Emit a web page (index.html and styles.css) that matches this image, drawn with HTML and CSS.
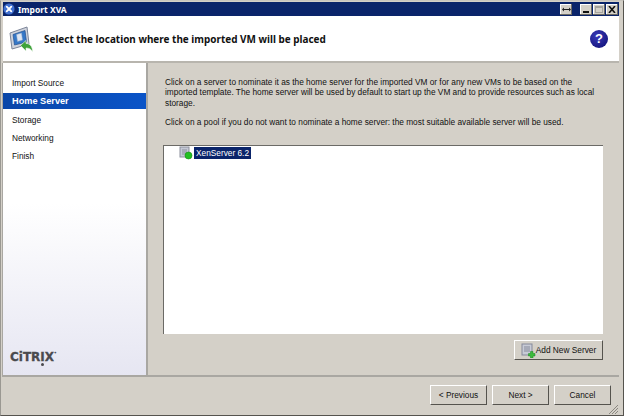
FILE: index.html
```html
<!DOCTYPE html>
<html lang="en">
<head>
    <meta charset="UTF-8">
    <meta name="viewport" content="width=device-width, initial-scale=1.0">
    <title>Import XVA</title>
    <link rel="stylesheet" href="styles.css">
</head>
<body>
    <div class="window">
        <div class="titlebar">
            <svg class="app-icon" width="12" height="12" viewBox="0 0 13 13">
                <circle cx="6.5" cy="6.5" r="6" fill="#3f6fd0"/>
                <path d="M4 4l5 5M9 4l-5 5" stroke="#fff" stroke-width="2" stroke-linecap="round"/>
            </svg>
            <span class="title-text">Import XVA</span>
            <span class="spacer"></span>
            <span class="cap-btn cap-wide">
                <svg width="9" height="5" viewBox="0 0 9 5"><path d="M0 2.5l2-2v1.500h5V.5l2 2-2 2V3H2v1.500z" fill="#222"/></svg>
            </span>
            <span class="cap-btn cap-gap"><i class="min-bar"></i></span>
            <span class="cap-btn"><i class="max-box"></i></span>
            <span class="cap-btn">
                <svg width="8" height="7" viewBox="0 0 8 7"><path d="M1 0l6 7M7 0L1 7" stroke="#111" stroke-width="1.600"/></svg>
            </span>
        </div>
        <div class="header">
            <svg class="header-icon" width="24" height="26" viewBox="0 0 24 26">
                <path d="M1 7L18 1l2 17L3 23z" fill="#cfd3dc" stroke="#7d8699"/>
                <path d="M4 8.500L16 4.500l1.500 11.500-12 3z" fill="#3578c8" stroke="#25508f" stroke-width=".7"/>
                <path d="M7.500 8.500l5-1.500 1 7-5 1.500z" fill="#dfe6f2" stroke="#8fa6c4" stroke-width=".5"/>
                <path d="M11.500 19.500l5.500-5v3c4 0 6.500 3 6.500 8-1.500-2.500-3.500-3.500-6.500-3.500v3z" fill="#3ea23a" stroke="#e8f3e6" stroke-width=".6"/>
            </svg>
            <h1 class="header-title">Select the location where the imported VM will be placed</h1>
            <span class="help">?</span>
        </div>
        <div class="middle">
            <div class="sidebar">
                <ul class="steps">
                    <li>Import Source</li>
                    <li class="active">Home Server</li>
                    <li>Storage</li>
                    <li>Networking</li>
                    <li>Finish</li>
                </ul>
                <div class="logo">CiTR<span class="logo-dot">I</span>X<sup class="logo-mark">&#8226;</sup></div>
            </div>
            <div class="content">
                <p class="intro">Click on a server to nominate it as the home server for the imported VM or for any new VMs to be based on the imported template. The home server will be used by default to start up the VM and to provide resources such as local storage.</p>
                <p class="intro">Click on a pool if you do not want to nominate a home server: the most suitable available server will be used.</p>
                <div class="server-list">
                    <div class="server-row">
                        <svg width="14" height="14" viewBox="0 0 14 14">
                            <rect x="1" y="1" width="9" height="10" fill="#c5c9d6" stroke="#8b8f9c"/>
                            <path d="M3 4h5M3 6h5M3 8h5" stroke="#8b8f9c"/>
                            <circle cx="9.500" cy="9.500" r="3.500" fill="#22c022" stroke="#148a14" stroke-width=".6"/>
                        </svg>
                        <span class="server-name">XenServer 6.2</span>
                    </div>
                </div>
                <div class="list-actions">
                    <button class="btn btn-add">
                        <svg width="15" height="15" viewBox="0 0 15 15">
                            <rect x="1" y="1" width="10" height="11" fill="#c8cbd6" stroke="#85899a"/>
                            <path d="M3 4h6M3 6h6M3 8h6" stroke="#85899a"/>
                            <path d="M9.500 8.500h2.500v2h2v2.500h-2v2H9.500v-2h-2v-2.500h2z" fill="#3dbb3d" stroke="#1c861c" stroke-width=".5"/>
                        </svg>Add New Server
                    </button>
                </div>
            </div>
        </div>
        <div class="footer">
            <button class="btn btn-nav">&lt; Previous</button>
            <button class="btn btn-nav">Next &gt;</button>
            <button class="btn btn-nav">Cancel</button>
            <svg class="grip" width="11" height="11" viewBox="0 0 11 11"><path d="M10 1L1 10M10 4L4 10M10 7l-3 3" stroke="#8a8780"/></svg>
        </div>
    </div>
</body>
</html>
```
FILE: styles.css
```css
* {
    box-sizing: border-box;
}
html, body {
    margin: 0;
    height: 100%;
}
body {
    font-family: "Liberation Sans", Arial, sans-serif;
    font-size: 8.300px;
    color: #111;
    background: #d4d0c8;
    overflow: hidden;
}
.window {
    width: 624px;
    height: 416px;
    display: flex;
    flex-direction: column;
    padding: 1px 4px 0 2px;
    background: #d4d0c8;
    border-bottom: 1px solid #55534e;
    border-right: 1px solid #55534e;
    border-top: 1px solid #c8c5be;
    border-left: 1px solid #9a9892;
}
.titlebar {
    height: 14px;
    flex: none;
    display: flex;
    align-items: center;
    padding: 0 1px 0 0;
    background: #0a246a;
    color: #fff;
}
.title-text {
    margin-left: 3px;
    font-family: "Noto Sans", sans-serif;
    font-weight: 700;
    font-size: 8.500px;
}
.spacer {
    flex: 1;
}
.app-icon {
    flex: none;
}
.cap-btn {
    width: 12px;
    height: 11px;
    margin-left: 1px;
    display: flex;
    align-items: center;
    justify-content: center;
    background: #d4d0c8;
    box-shadow: inset -1px -1px 0 #6d6b66, inset 1px 1px 0 #fff;
}
.cap-gap {
    margin-left: 8px;
}
.min-bar {
    width: 6px;
    height: 2px;
    margin-top: 6px;
    background: #111;
}
.max-box {
    width: 8px;
    height: 7px;
    border: 1px solid #a5a39d;
    border-top-width: 2px;
}
.header {
    height: 47px;
    flex: none;
    display: flex;
    align-items: center;
    padding: 0 11px 0 6px;
    background: #fff;
    border-bottom: 2px solid #b8b5ae;
}
.header-title {
    flex: 1;
    margin: 0 0 0 11px;
    font-family: "Noto Sans", sans-serif;
    font-size: 9.950px;
    font-weight: 700;
    color: #111;
}
.help {
    width: 18px;
    height: 18px;
    border-radius: 50%;
    display: flex;
    align-items: center;
    justify-content: center;
    background: radial-gradient(circle at 40% 35%, #3a3ab8, #0b0b70);
    color: #fff;
    font-size: 13px;
    font-weight: 700;
}
.middle {
    flex: 1;
    display: flex;
    min-height: 0;
}
.sidebar {
    width: 145px;
    flex: none;
    display: flex;
    flex-direction: column;
    background: linear-gradient(to bottom, #fff 45%, #e6e6f2);
    border-right: 2px solid #a9a7a2;
    border-bottom: 2px solid #a9a7a2;
    box-shadow: -1px 0 0 #a9a7a2;
}
.steps {
    list-style: none;
    margin: 12px 0 0;
    padding: 0;
}
.steps li {
    height: 16px;
    margin-bottom: 2.300px;
    padding-left: 9px;
    line-height: 16px;
}
.steps .active {
    background: linear-gradient(to right, #0a46a8, #0a54c8);
    color: #fff;
    font-size: 9.200px;
    font-weight: 700;
}
.logo {
    margin: auto 0 10px 7px;
    font-family: "DejaVu Sans", sans-serif;
    font-size: 12px;
    font-weight: 700;
    line-height: 16px;
    color: #4a4a4e;
    -webkit-text-stroke: .3px #4a4a4e;
}
.logo-dot {
    position: relative;
}
.logo-dot::after {
    content: "";
    position: absolute;
    left: 1px;
    bottom: -2px;
    width: 3px;
    height: 3px;
    border-radius: 50%;
    background: #4a4a4e;
}
.logo-mark {
    font-size: 4px;
    vertical-align: 7px;
    line-height: 0;
}
.content {
    flex: 1;
    min-width: 0;
    display: flex;
    flex-direction: column;
    padding: 14px 16px 15px 15px;
    border-bottom: 2px solid #a9a7a2;
}
.intro {
    margin: 0 0 8.600px;
    padding: 0 0 0 2px;
    line-height: 10.400px;
}
.server-list {
    flex: 1;
    margin-top: 9.200px;
    padding: 0 0 0 15px;
    background: #fff;
    border-top: 1px solid #6b6a66;
    border-left: 1px solid #6b6a66;
}
.server-row {
    display: flex;
    align-items: flex-start;
    height: 15px;
    gap: 1px;
}
.server-name {
    margin-top: 1px;
    padding: 0 2px;
    line-height: 12px;
    background: #0a246a;
    color: #fff;
}
.list-actions {
    display: flex;
    justify-content: flex-end;
    margin-top: 6px;
}
.btn {
    font: inherit;
    color: #111;
    height: 20px;
    padding: 0;
    display: flex;
    align-items: center;
    justify-content: center;
    background: #d4d0c8;
    border: 1px solid;
    border-color: #fff #55534e #55534e #fff;
}
.btn-add {
    width: 89px;
}
.footer {
    height: 38px;
    flex: none;
    display: flex;
    align-items: center;
    justify-content: flex-end;
    gap: 5px;
    padding: 0 8px 2px 0;
    position: relative;
}
.btn-nav {
    width: 57px;
}
.grip {
    position: absolute;
    right: 0;
    bottom: 0;
}
```
